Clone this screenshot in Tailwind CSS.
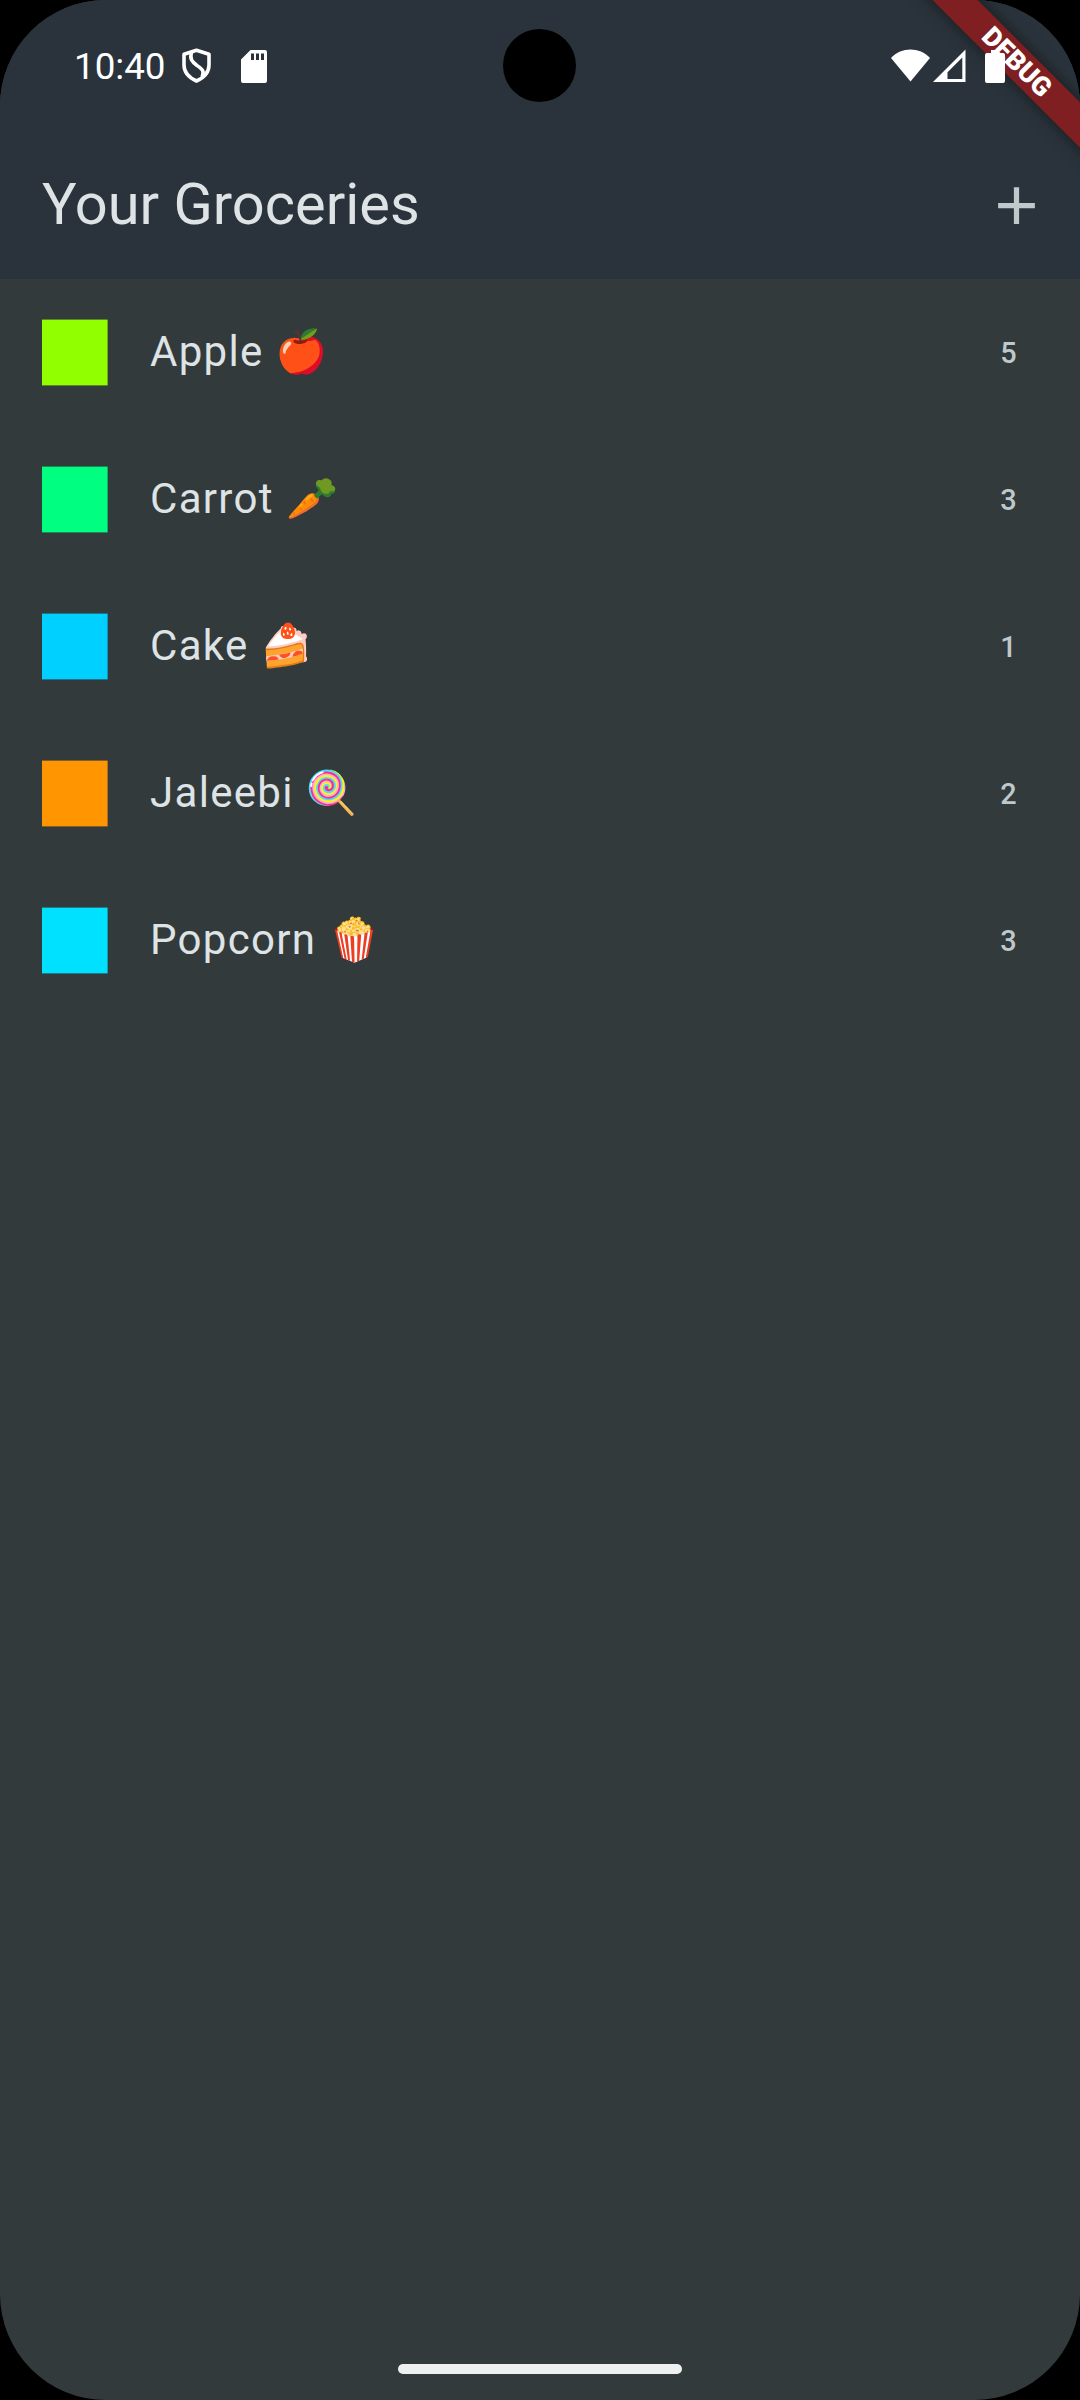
<!DOCTYPE html>
<html lang="en">
<head>
<meta charset="utf-8">
<title>Your Groceries</title>
<script src="https://cdn.jsdelivr.net/npm/@tailwindcss/browser@4"></script>
</head>
<body class="bg-black">
<div class="relative flex h-[2400px] w-[1080px] flex-col overflow-hidden rounded-[106px] bg-[#323a3c] font-[Roboto,sans-serif]">
  <header class="flex h-[279px] shrink-0 flex-col bg-[#2a333b]">
    <div class="flex h-[132px] items-center pl-[74px] pr-[75px] text-white">
      <span class="w-[107px] text-[36.75px] leading-[43px]">10:40</span>
      <svg class="h-[36px] w-[31px]" viewBox="0 0 31 36" fill="none" stroke="#fff" stroke-width="3.6" stroke-linejoin="round"><path d="M15.5 2.2 28 6.2V17c0 7-4.700 12.500-12.500 16C7.700 29.500 3 24 3 17V6.200Z"/><path d="M10.500 4C8.500 11 11 14 16 17.500S24 23 21 29"/></svg>
      <svg class="ml-[29px] h-[33px] w-[26px]" viewBox="0 0 26 33"><path fill="#fff" fill-rule="evenodd" d="M9.500 0H24a2 2 0 0 1 2 2V31a2 2 0 0 1-2 2H2a2 2 0 0 1-2-2V9.500ZM10 3.500V10h3V3.500Zm5 0V10h3V3.500Zm5 0V10h3V3.500Z"/></svg>
      <span class="grow"></span>
      <svg class="h-[34px] w-[40px]" viewBox="0 0 40 34" fill="#fff"><path d="M0 9C10.500-2.300 28.500-2.300 39 9L19.500 32.500Z"/></svg>
      <svg class="ml-[2px] h-[34px] w-[33px]" viewBox="0 0 33 34"><path fill="#fff" fill-rule="evenodd" d="M32.500 .500V33H0ZM29.300 8.500 14.500 23.300V30H29.300Z"/></svg>
      <svg class="relative z-10 ml-[19px] h-[34px] w-[20px]" viewBox="0 0 20 34"><path fill="#fff" d="M6 1h8v3h4a2 2 0 0 1 2 2v26a2 2 0 0 1-2 2H2a2 2 0 0 1-2-2V6a2 2 0 0 1 2-2h4Z"/></svg>
    </div>
    <div class="flex h-[147px] items-center justify-between pl-[42px] pr-[32px]">
      <h1 class="pb-[4px] text-[57.75px] leading-[74px] text-[#dee3e5]">Your Groceries</h1>
      <svg class="size-[63px]" viewBox="0 0 24 24" fill="#bfc8cb"><path d="M19 13h-6v6h-2v-6H5v-2h6V5h2v6h6v2z"/></svg>
    </div>
  </header>

  <main class="flex grow flex-col text-[42px] leading-[63px] tracking-[1.3125px] text-[#dee3e5]">
    <div class="flex h-[147px] items-center pl-[42px] pr-[62px]"><svg class="h-[67px] w-[66px]"><rect y="0.6" width="65.6" height="65.8" fill="#91ff00"/></svg><span class="ml-[42px] grow pb-[2px]">Apple 🍎</span><span class="text-[28.875px] font-medium leading-[42px] text-[#bfc8cb]">5</span></div>
    <div class="flex h-[147px] items-center pl-[42px] pr-[62px]"><svg class="h-[67px] w-[66px]"><rect y="0.6" width="65.6" height="65.8" fill="#00ff80"/></svg><span class="ml-[42px] grow pb-[2px]">Carrot 🥕</span><span class="text-[28.875px] font-medium leading-[42px] text-[#bfc8cb]">3</span></div>
    <div class="flex h-[147px] items-center pl-[42px] pr-[62px]"><svg class="h-[67px] w-[66px]"><rect y="0.6" width="65.6" height="65.8" fill="#00d0ff"/></svg><span class="ml-[42px] grow pb-[2px]">Cake 🍰</span><span class="text-[28.875px] font-medium leading-[42px] text-[#bfc8cb]">1</span></div>
    <div class="flex h-[147px] items-center pl-[42px] pr-[62px]"><svg class="h-[67px] w-[66px]"><rect y="0.6" width="65.6" height="65.8" fill="#ff9500"/></svg><span class="ml-[42px] grow pb-[2px]">Jaleebi 🍭</span><span class="text-[28.875px] font-medium leading-[42px] text-[#bfc8cb]">2</span></div>
    <div class="flex h-[147px] items-center pl-[42px] pr-[62px]"><svg class="h-[67px] w-[66px]"><rect y="0.6" width="65.6" height="65.8" fill="#00e1ff"/></svg><span class="ml-[42px] grow pb-[2px]">Popcorn 🍿</span><span class="text-[28.875px] font-medium leading-[42px] text-[#bfc8cb]">3</span></div>
  </main>

  <footer class="flex h-[36px] shrink-0 justify-center"><div class="h-[10px] w-[284px] rounded-full bg-[#eff1f1]"></div></footer>

  <!-- camera cutout -->
  <div class="absolute left-[503px] top-[29px] size-[73px] rounded-full bg-black"></div>
  <!-- debug ribbon -->
  <div class="absolute left-[867px] top-[46px] flex h-[32px] w-[300px] rotate-45 items-center justify-center bg-[#7f1f22] text-[26.8px] font-black leading-none text-white shadow-[0_0_16px_rgba(0,0,0,0.5)]">DEBUG</div>
</div>
</body>
</html>
